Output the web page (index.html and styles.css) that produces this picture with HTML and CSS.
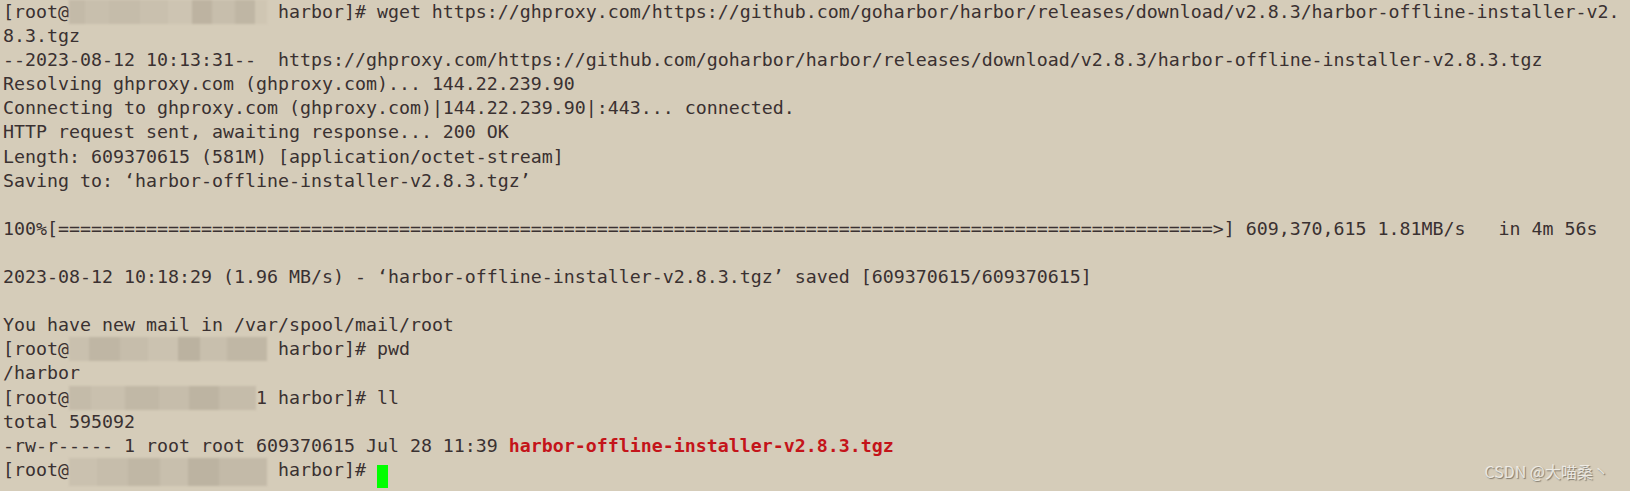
FILE: index.html
```html
<!DOCTYPE html>
<html lang="en">
<head>
<meta charset="utf-8">
<title>Terminal</title>
<link rel="stylesheet" href="styles.css">
</head>
<body>
<main class="terminal">
<pre class="screen">[root@<span class="mask mask-a"></span> harbor]# wget https://ghproxy.com/https://github.com/goharbor/harbor/releases/download/v2.8.3/harbor-offline-installer-v2.
8.3.tgz
--2023-08-12 10:13:31--  https://ghproxy.com/https://github.com/goharbor/harbor/releases/download/v2.8.3/harbor-offline-installer-v2.8.3.tgz
Resolving ghproxy.com (ghproxy.com)... 144.22.239.90
Connecting to ghproxy.com (ghproxy.com)|144.22.239.90|:443... connected.
HTTP request sent, awaiting response... 200 OK
Length: 609370615 (581M) [application/octet-stream]
Saving to: ‘harbor-offline-installer-v2.8.3.tgz’

100%[=========================================================================================================>] 609,370,615 1.81MB/s   in 4m 56s

2023-08-12 10:18:29 (1.96 MB/s) - ‘harbor-offline-installer-v2.8.3.tgz’ saved [609370615/609370615]

You have new mail in /var/spool/mail/root
[root@<span class="mask mask-b"></span> harbor]# pwd
/harbor
[root@<span class="mask mask-c"></span>1 harbor]# ll
total 595092
-rw-r----- 1 root root 609370615 Jul 28 11:39 <span class="archive">harbor-offline-installer-v2.8.3.tgz</span>
[root@<span class="mask mask-d"></span> harbor]# <span class="cursor"></span></pre>
<div class="watermark">CSDN @大喵桑丶</div>
</main>
</body>
</html>
```

FILE: styles.css
```css
html, body {
  margin: 0;
  padding: 0;
}

body {
  background: #d5ccb9;
  width: 1630px;
  height: 491px;
  overflow: hidden;
}

.terminal {
  position: relative;
  width: 1630px;
  height: 491px;
  background: #d5ccb9;
}

.screen {
  margin: 0;
  padding: 0 0 0 3px;
  font-family: "DejaVu Sans Mono", "Liberation Mono", monospace;
  font-size: 18.27px;
  line-height: 24.1px;
  color: #3a3131;
  white-space: pre;
}

.mask {
  display: inline-block;
  height: 24px;
  vertical-align: top;
  filter: blur(1px);
}

.mask-a {
  width: 18ch;
  background: linear-gradient(90deg,
    #c3baa8 0%, #c3baa8 8%,
    #c8bfad 8%, #c8bfad 20%,
    #c5bcaa 20%, #c5bcaa 36%,
    #c9c0ae 36%, #c9c0ae 50%,
    #cdc4b2 50%, #cdc4b2 62%,
    #bdb3a1 62%, #bdb3a1 72%,
    #c7beac 72%, #c7beac 84%,
    #bfb6a4 84%, #bfb6a4 94%,
    #cfc6b3 94%, #cfc6b3 100%);
}

.mask-b {
  width: 18ch;
  background: linear-gradient(90deg,
    #c9c0ae 0%, #c9c0ae 10%,
    #bfb6a4 10%, #bfb6a4 26%,
    #c6bdab 26%, #c6bdab 40%,
    #cbc2b0 40%, #cbc2b0 55%,
    #bbb2a0 55%, #bbb2a0 66%,
    #c8bfad 66%, #c8bfad 80%,
    #c0b7a5 80%, #c0b7a5 100%);
}

.mask-c {
  width: 17ch;
  background: linear-gradient(90deg,
    #c4bba9 0%, #c4bba9 12%,
    #c9c0ae 12%, #c9c0ae 30%,
    #c1b8a6 30%, #c1b8a6 48%,
    #c6bdab 48%, #c6bdab 64%,
    #bdb4a2 64%, #bdb4a2 80%,
    #c5bcaa 80%, #c5bcaa 100%);
}

.mask-d {
  width: 18ch;
  height: 28px;
  background: linear-gradient(90deg,
    #cac1af 0%, #cac1af 14%,
    #c6bdab 14%, #c6bdab 30%,
    #c0b7a5 30%, #c0b7a5 46%,
    #c8bfad 46%, #c8bfad 60%,
    #bcb3a1 60%, #bcb3a1 76%,
    #c3baa8 76%, #c3baa8 100%);
}

.archive {
  color: #c4141a;
  font-weight: bold;
}

.cursor {
  display: inline-block;
  width: 11px;
  height: 23px;
  background: #00ff00;
  vertical-align: -12px;
}

.watermark {
  position: absolute;
  right: 21px;
  bottom: 10px;
  font-family: "Noto Sans CJK SC", "Noto Sans", sans-serif;
  font-size: 16px;
  line-height: 20px;
  color: rgba(245, 243, 238, 0.85);
  text-shadow: 1px 1px 1px rgba(60, 55, 45, 0.55);
}
```
